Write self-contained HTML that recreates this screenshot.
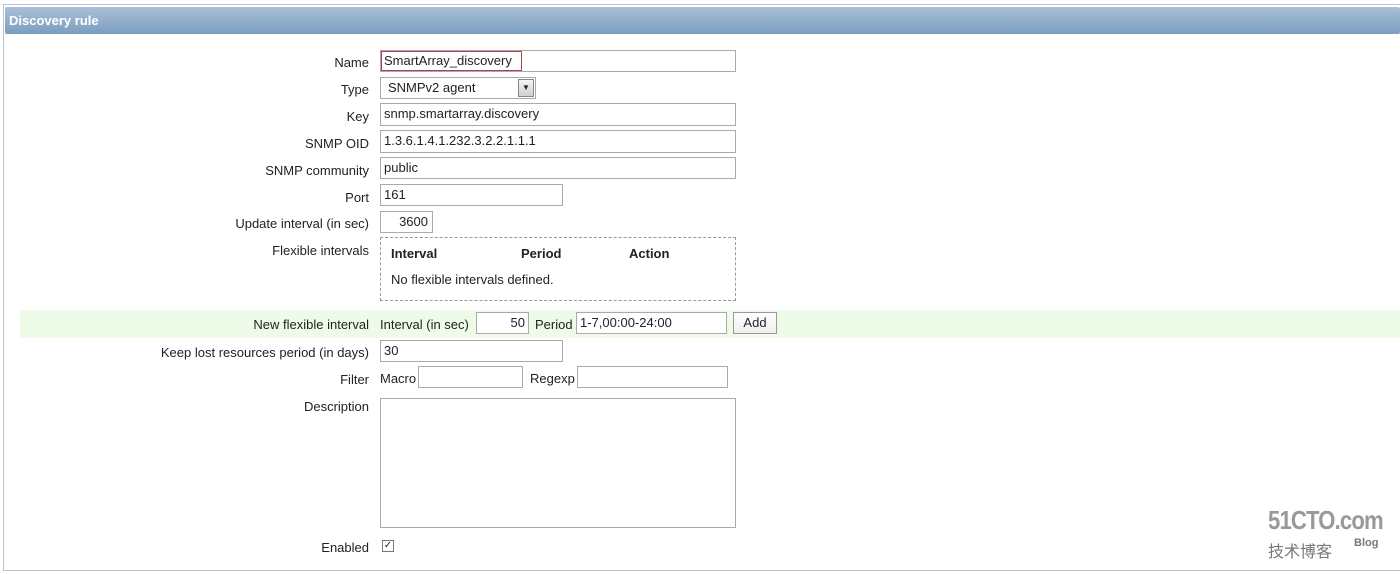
<!DOCTYPE html>
<html><head><meta charset="utf-8"><style>
body{margin:0;width:1400px;height:574px;background:#fff;font-family:"Liberation Sans",sans-serif;font-size:13px;color:#222;position:relative;overflow:hidden}
.a{position:absolute}
.outer{left:3px;top:4px;width:1400px;height:567px;border:1px solid #b8c4d0;box-sizing:border-box}
.hdr{left:5px;top:7px;width:1395px;height:27px;background:linear-gradient(#a9c0d8,#7c9dbf);color:#fff;font-weight:bold;font-size:13px;line-height:27px;padding-left:4px;box-sizing:border-box;border-radius:2px}
.l{position:absolute;right:1031px;text-align:right;white-space:nowrap}
.i{position:absolute;border:1px solid #aaa;box-sizing:border-box;background:#fff;padding-left:3px;line-height:20px;white-space:nowrap}
</style></head><body>
<div class="a outer"></div>
<div class="a hdr">Discovery rule</div>
<div class="l" style="top:55px">Name</div>
<div class="i" style="left:380px;top:50px;width:356px;height:22px"></div>
<div class="i" style="left:381px;top:51px;width:141px;height:20px;border-color:#b04050;line-height:18px;padding-left:2px">SmartArray_discovery</div>
<div class="l" style="top:82px">Type</div>
<div class="i" style="left:380px;top:77px;width:156px;height:22px;padding-left:7px">SNMPv2 agent</div>
<div class="a" style="left:518px;top:79px;width:16px;height:18px;background:linear-gradient(#f4f4f4,#d0d0d0);border:1px solid #888;box-sizing:border-box;font-size:8px;text-align:center;line-height:16px">▼</div>
<div class="l" style="top:109px">Key</div>
<div class="i" style="left:380px;top:103px;width:356px;height:23px">snmp.smartarray.discovery</div>
<div class="l" style="top:136px">SNMP OID</div>
<div class="i" style="left:380px;top:130px;width:356px;height:23px">1.3.6.1.4.1.232.3.2.2.1.1.1</div>
<div class="l" style="top:163px">SNMP community</div>
<div class="i" style="left:380px;top:157px;width:356px;height:22px">public</div>
<div class="l" style="top:190px">Port</div>
<div class="i" style="left:380px;top:184px;width:183px;height:22px">161</div>
<div class="l" style="top:216px">Update interval (in sec)</div>
<div class="i" style="left:380px;top:211px;width:53px;height:22px;text-align:right;padding-right:4px">3600</div>
<div class="l" style="top:243px">Flexible intervals</div>
<div class="a" style="left:380px;top:237px;width:356px;height:64px;border:1px dashed #999;box-sizing:border-box"></div>
<div class="a" style="left:391px;top:246px;font-weight:bold">Interval</div>
<div class="a" style="left:521px;top:246px;font-weight:bold">Period</div>
<div class="a" style="left:629px;top:246px;font-weight:bold">Action</div>
<div class="a" style="left:391px;top:272px">No flexible intervals defined.</div>
<div class="a" style="left:20px;top:310px;width:1380px;height:28px;background:#eefbe8"></div>
<div class="l" style="top:317px">New flexible interval</div>
<div class="a" style="left:380px;top:317px">Interval (in sec)</div>
<div class="i" style="left:476px;top:312px;width:53px;height:22px;text-align:right;padding-right:3px">50</div>
<div class="a" style="left:535px;top:317px">Period</div>
<div class="i" style="left:576px;top:312px;width:151px;height:22px">1-7,00:00-24:00</div>
<div class="i" style="left:733px;top:312px;width:44px;height:22px;text-align:center;padding:0;background:linear-gradient(#fff,#eee);border-color:#999">Add</div>
<div class="l" style="top:345px">Keep lost resources period (in days)</div>
<div class="i" style="left:380px;top:340px;width:183px;height:22px">30</div>
<div class="l" style="top:372px">Filter</div>
<div class="a" style="left:380px;top:371px">Macro</div>
<div class="i" style="left:418px;top:366px;width:105px;height:22px"></div>
<div class="a" style="left:530px;top:371px">Regexp</div>
<div class="i" style="left:577px;top:366px;width:151px;height:22px"></div>
<div class="l" style="top:399px">Description</div>
<div class="i" style="left:380px;top:398px;width:356px;height:130px"></div>
<div class="l" style="top:540px">Enabled</div>
<div class="a" style="left:382px;top:540px;width:12px;height:12px;border:1px solid #777;box-sizing:border-box;font-size:10px;line-height:10px;text-align:center">✓</div>
<div class="a" style="left:1268px;top:505px;font-size:26px;font-weight:bold;color:#999;letter-spacing:-1px;transform:scaleX(.85);transform-origin:left">51CTO.com</div>
<div class="a" style="left:1268px;top:538px;font-size:16px;color:#777;font-family:'Noto Sans CJK SC',sans-serif">技术博客</div>
<div class="a" style="left:1354px;top:537px;font-size:11px;color:#777;font-weight:bold">Blog</div>
</body></html>
